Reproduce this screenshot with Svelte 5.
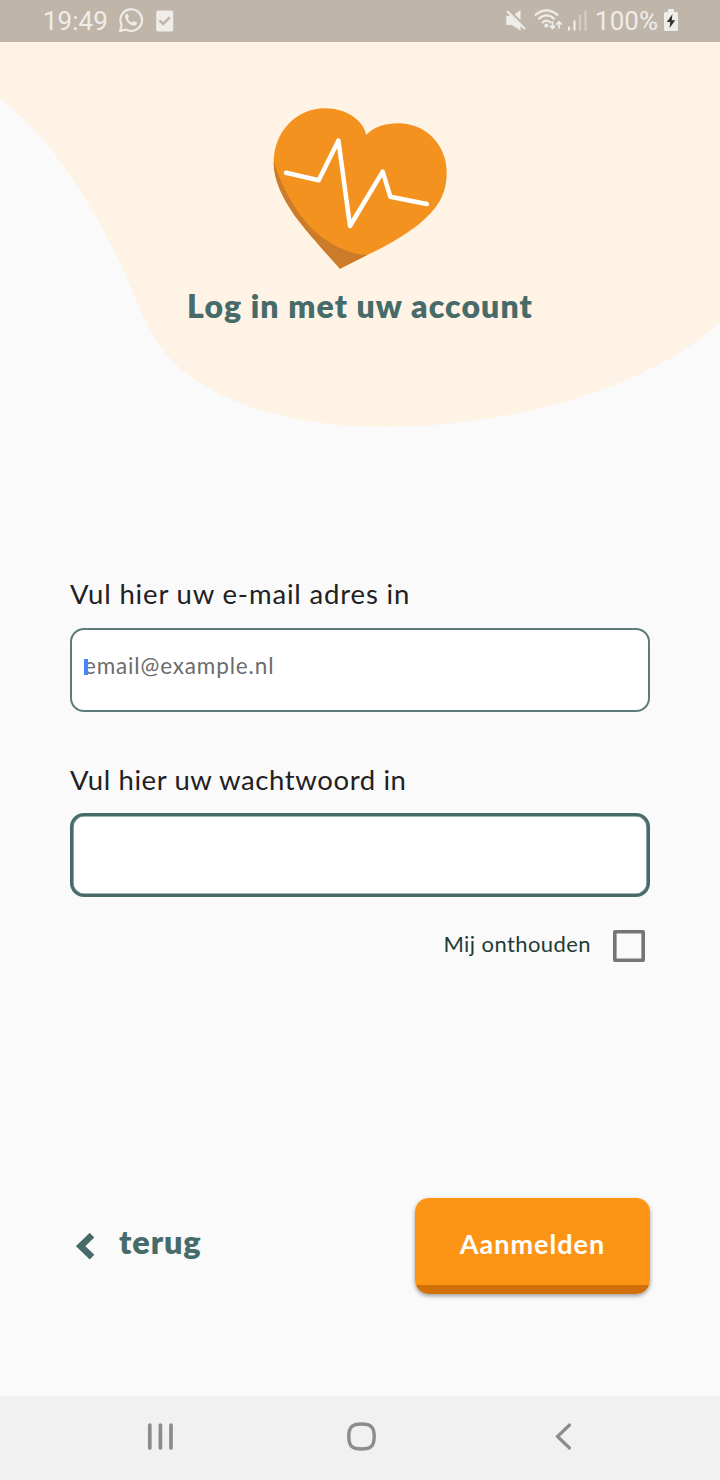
<script>
  let email = $state('');
  let password = $state('');
</script>

<div class="screen">
  <header class="status">
    <span class="clock">19:49</span>
    <svg class="whatsapp" width="26" height="26" viewBox="0 0 26 26">
      <path d="M2 24 L3.7 18.2 A10.8 10.8 0 1 1 7.8 22.4 Z" fill="none" stroke="#efedea" stroke-width="2.1" stroke-linejoin="round" />
      <path d="M8.9 6.8 C7.4 7.4 6.8 9 7.3 10.7 C8.4 14.5 11.5 17.6 15.3 18.6 C17.3 19 18.7 18 18.9 16.2 L18.8 15.5 L15.6 14 L14.2 15.7 C12.2 15 10.5 13.4 9.7 11.5 L10.9 10 L9.7 6.9 Z" fill="#efedea" />
    </svg>
    <svg class="task" width="18" height="22" viewBox="0 0 18 22">
      <rect x="0.2" y="0.5" width="17" height="21" rx="2" fill="#efedea" />
      <path d="M3.5 10.3 L7.2 14 L13.8 7.4" fill="none" stroke="#bfb5a8" stroke-width="2.6" />
    </svg>
    <div class="right">
      <svg width="20" height="21" viewBox="0 0 20 21">
        <path d="M0.3 5.8 H5.5 L14.5 13.5 V20.8 L5.8 15 H0.3 Z M8.6 4.3 L14.5 0 V10 Z" fill="#efedea" />
        <path d="M1.2 1.2 L19 19" stroke="#efedea" stroke-width="2.1" />
      </svg>
      <svg class="wifi" width="29" height="22" viewBox="0 0 29 22">
        <g fill="none" stroke="#efedea" stroke-width="2.2">
          <path d="M0.8 6.3 Q12.5 -3.7 24.2 6.3" />
          <path d="M4.4 10.2 Q12.5 2.7 20.6 10.2" />
          <path d="M8 14 Q12.5 9.5 17 14" />
          <path d="M18.5 12 V19 M15.9 16.7 L18.5 19.4 L21.1 16.7 M25 19.5 V13 M22.2 15.6 L25 12.8 L27.8 15.6" stroke-width="1.7" />
        </g>
        <circle cx="12.4" cy="16.5" r="2" fill="#efedea" />
      </svg>
      <svg class="signal" width="19" height="21" viewBox="0 0 19 21">
        <path d="M1 16.5 V20.5 M6.5 10.5 V20.5" stroke="#efedea" stroke-width="2.2" />
        <path d="M12 5 V20.5 M17.5 0.5 V20.5" stroke="#d6cec5" stroke-width="2.2" />
      </svg>
      <span class="percent">100%</span>
      <svg class="battery" width="14" height="22" viewBox="0 0 14 22">
        <path d="M4 0 H10 V3 H12.5 Q14 3 14 4.5 V20.5 Q14 22 12.5 22 H1.5 Q0 22 0 20.5 V4.5 Q0 3 1.5 3 H4 Z" fill="#efedea" />
        <path d="M8.4 5.2 L2.8 13 H6.2 L5.6 19 L11.2 11.3 H7.8 Z" fill="#36322e" />
      </svg>
    </div>
  </header>

  <section class="hero">
    <svg class="blob" width="720" height="386" viewBox="0 42 720 386">
      <path d="M0 42 H720 V322 C650 388 510 427 386 427 C280 427 190 396 156 340 C145 322 141 312 134 295 C107 228 58 142 0 99 Z" fill="#fff3e5" />
    </svg>
    <svg class="heart" width="180" height="166" viewBox="270 105 180 166">
      <path d="M340 268.7 C325 252 307 232 296.5 218 C285 202 273.7 182 273.7 162 C274 131 297 108.3 325 108.3 C347 108.3 363.5 121 366.3 135 C373 127 386 123.3 398 123.3 C426 123.3 446.7 145 446.7 172 C446.7 186 443.5 196 436.5 206 C423 225 395 242 367.3 255 Z" fill="#f3921e" />
      <path d="M273.7 162 C273.7 182 285 202 296.5 218 C307 232 325 252 340 268.7 L367.5 254.8 C353 255 339 249 323 238 C299 220 283 190 273.7 162 Z" fill="#cb7b29" />
      <path d="M286 172.7 L318.7 180.3 L338.4 140.5 L350 226 L382.7 171.7 L390.3 196.7 L426.9 204" fill="none" stroke="#fff" stroke-width="4.5" stroke-linecap="round" stroke-linejoin="round" />
    </svg>
    <h1>Log in met uw account</h1>
  </section>

  <main>
    <label class="l1" for="email">Vul hier uw e-mail adres in</label>
    <div class="field thin">
      <input id="email" type="text" placeholder="email@example.nl" bind:value={email} />
      <i class="caret"></i>
    </div>
    <label class="l2" for="password">Vul hier uw wachtwoord in</label>
    <div class="field thick">
      <input id="password" type="password" bind:value={password} />
    </div>
    <div class="remember"><span>Mij onthouden</span><i class="box"></i></div>
    <div class="actions">
      <a href="#terug" class="back">
        <svg width="19" height="27" viewBox="0 0 19 27">
          <path d="M16 2.2 L4.6 13.2 L16 24.2" fill="none" stroke="#466b69" stroke-width="6.6" />
        </svg>
        <span>terug</span>
      </a>
      <button><span>Aanmelden</span></button>
    </div>
  </main>

  <nav>
    <svg width="720" height="84" viewBox="0 1396 720 84" fill="none" stroke="#8c8c8c" stroke-linecap="round">
      <path d="M149.8 1425 V1448 M160.4 1425 V1448 M171 1425 V1448" stroke-width="3.7" />
      <path d="M361.5 1424 C371 1424 374.2 1427 374.2 1436.5 C374.2 1446 371 1449 361.5 1449 C352 1449 348.8 1446 348.8 1436.5 C348.8 1427 352 1424 361.5 1424 Z" stroke-width="3.4" />
      <path d="M569.5 1425 L557.5 1436.5 L569.5 1448" stroke-width="3.2" />
    </svg>
  </nav>
</div>

<style>
  :global(body) { margin: 0; background: #fafafa; }
  .screen { width: 720px; height: 1480px; display: flex; flex-direction: column; background: #fafafa; font-family: Lato, "Open Sans", sans-serif; overflow: hidden; }
  svg { display: block; flex: none; }
  .status { height: 42px; box-sizing: border-box; background: #bfb5a8; color: #efedea; display: flex; align-items: center; padding: 0 42px 0 43px; font: 26px/42px Roboto, sans-serif; flex: none; }
  .whatsapp { margin-left: 10px; margin-top: -2px; }
  .task { margin-left: 12px; margin-top: -1px; }
  .right { display: flex; align-items: center; margin-left: auto; }
  .right svg { margin-top: -2px; }
  .right .wifi { margin-left: 8px; }
  .right .signal { margin-left: 5px; margin-top: -1px; }
  .percent { margin-left: 8px; }
  .right .battery { margin-left: 6px; }
  .hero { height: 386px; display: grid; grid-template-rows: 63px 166px 1fr; justify-items: center; flex: none; }
  .blob { grid-area: 1 / 1 / 4 / 2; }
  .heart { grid-area: 2 / 1; }
  h1 { grid-area: 3 / 1; margin: 13px 0 0; font-size: 32px; line-height: 44px; height: 44px; font-weight: 800; color: #466b69; letter-spacing: 1.1px; white-space: nowrap; }
  main { flex: 1; padding: 0 70px; display: flex; flex-direction: column; }
  label { display: block; height: 40px; line-height: 40px; font-size: 27.5px; color: #1f2122; white-space: nowrap; flex: none; }
  .l1 { margin-top: 146px; letter-spacing: 0.84px; }
  .l2 { margin-top: 48px; letter-spacing: 0.6px; }
  .field { position: relative; box-sizing: border-box; width: 580px; height: 84px; border-radius: 14px; background: #fff; flex: none; }
  .thin { border: 2px solid #5b7c7a; margin-top: 14px; }
  .thick { border: 3px solid #466b69; box-shadow: inset 0 0 0 0.6px #466b69; margin-top: 13px; }
  input { display: block; box-sizing: border-box; width: 100%; height: 100%; border: 0; outline: 0; background: none; padding: 0 12px 9px; font: 22.5px Lato, sans-serif; letter-spacing: 0.85px; }
  input::placeholder { color: #6c6c6c; opacity: 1; }
  .caret { position: absolute; left: 12px; top: 29px; width: 4px; height: 16px; background: #4285ff; }
  .remember { height: 32px; margin-top: 33px; padding-right: 5px; display: flex; justify-content: flex-end; gap: 22px; font-size: 22px; line-height: 28px; color: #233b38; letter-spacing: 0.42px; flex: none; }
  .box { box-sizing: border-box; width: 32px; height: 32px; border: 3px solid #757575; box-shadow: inset 0 0 0 0.6px #757575; border-radius: 2px; }
  .actions { display: flex; justify-content: space-between; margin-top: 236px; height: 96px; }
  .back { display: flex; align-items: center; padding-left: 6px; gap: 24px; color: #466b69; font-size: 32.5px; line-height: 40px; font-weight: 800; text-decoration: none; letter-spacing: 0.9px; height: 96px; }
  .back span { margin-top: -8px; }
  button { width: 235px; height: 96px; border: 0; padding: 0 0 4px; border-radius: 14px; background: linear-gradient(#fc9516 87px, #d07006 87px); box-shadow: 0 2px 4px rgba(0, 0, 0, 0.38); color: #fff; font: 700 27px/40px Lato, sans-serif; letter-spacing: 1px; }
  nav { height: 84px; background: #f1f1f1; flex: none; }
</style>
